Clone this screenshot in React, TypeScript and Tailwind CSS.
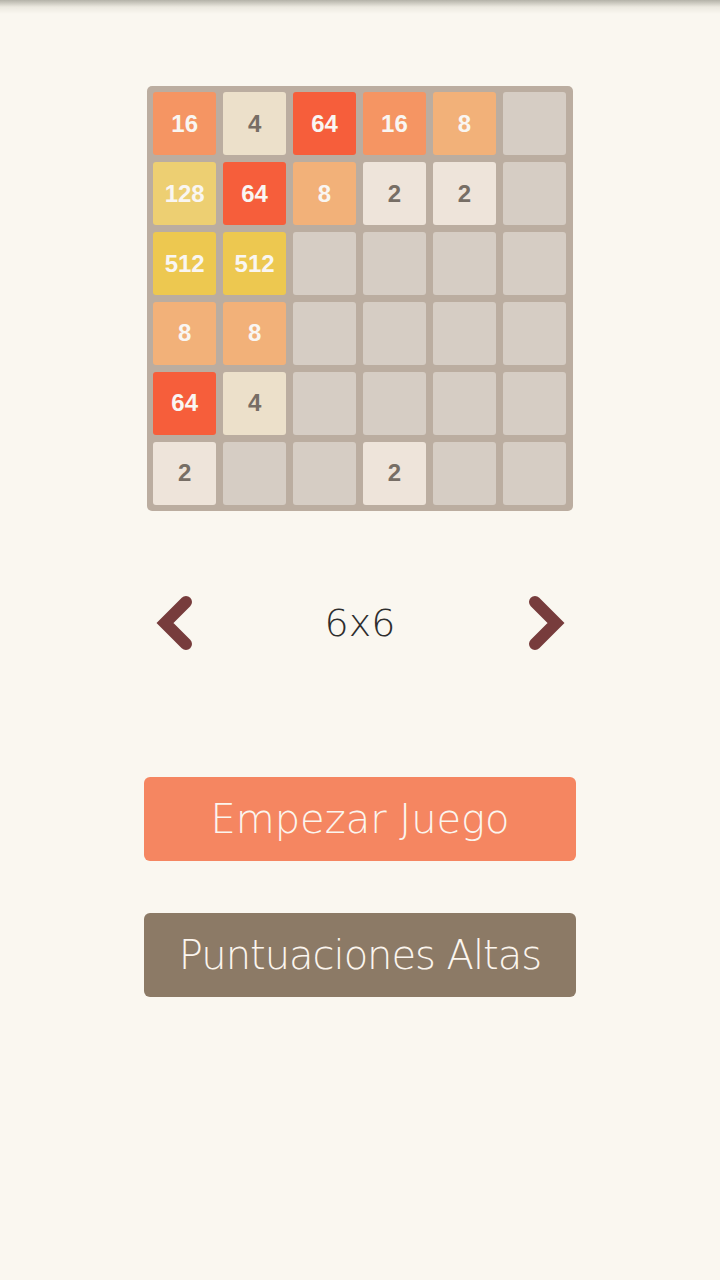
const board: number[][] = [
  [16, 4, 64, 16, 8, 0],
  [128, 64, 8, 2, 2, 0],
  [512, 512, 0, 0, 0, 0],
  [8, 8, 0, 0, 0, 0],
  [64, 4, 0, 0, 0, 0],
  [2, 0, 0, 2, 0, 0],
];

const tileStyle: Record<number, string> = {
  0: "bg-[#d6cdc4]",
  2: "bg-[#eee4da] text-[#776e65]",
  4: "bg-[#ece0ca] text-[#776e65]",
  8: "bg-[#f2b179] text-[#f9f6f2]",
  16: "bg-[#f59563] text-[#f9f6f2]",
  64: "bg-[#f65e3b] text-[#f9f6f2]",
  128: "bg-[#edcf72] text-[#f9f6f2]",
  512: "bg-[#edc850] text-[#f9f6f2]",
};

function Chevron({ dir }: { dir: "left" | "right" }) {
  return (
    <svg width="40" height="58" viewBox="0 0 40 58" fill="none">
      <path
        d={dir === "left" ? "M31 8 L10 29 L31 50" : "M9 8 L30 29 L9 50"}
        stroke="#773c3c"
        strokeWidth="12"
        strokeLinecap="round"
        strokeLinejoin="miter"
      />
    </svg>
  );
}

export default function App() {
  return (
    <div
      className="relative w-[720px] h-[1280px] bg-[#faf7f0] flex flex-col items-center"
      style={{ fontFamily: '"Liberation Sans", Arial, sans-serif' }}
    >
      {/* status bar shadow */}
      <div className="absolute top-0 left-0 right-0 h-[14px] bg-gradient-to-b from-[#b4b2a8] via-[#ece9e0] to-transparent" />

      {/* Board preview */}
      <div className="mt-[86px] w-[426px] h-[425px] bg-[#bbada0] rounded-[5px] pl-[6px] pr-[7px] py-[6px] grid grid-cols-6 gap-[6.5px]">
        {board.flat().map((v, i) => (
          <div
            key={i}
            className={`rounded-[3px] flex items-center justify-center text-[24px] font-bold ${tileStyle[v]}`}
          >
            {v > 0 ? v : ""}
          </div>
        ))}
      </div>

      {/* Size selector */}
      <div className="mt-[83px] w-[411px] flex items-center justify-between">
        <Chevron dir="left" />
        <span
          className="text-[38px] text-[#2e2e2e] font-light leading-none"
          style={{ fontFamily: '"DejaVu Sans", sans-serif' }}
        >
          6x6
        </span>
        <Chevron dir="right" />
      </div>

      {/* Buttons */}
      <div
        className="mt-[125px] flex flex-col gap-[52px]"
        style={{ fontFamily: '"DejaVu Sans", sans-serif' }}
      >
        <button className="w-[432px] h-[84px] rounded-[6px] bg-[#f58661] text-[#fbf5ee] text-[40px] font-extralight">
          Empezar Juego
        </button>
        <button className="w-[432px] h-[84px] rounded-[6px] bg-[#8c7a66] text-[#fbf5ee] text-[40px] font-extralight tracking-[-1px]">
          Puntuaciones Altas
        </button>
      </div>
    </div>
  );
}
